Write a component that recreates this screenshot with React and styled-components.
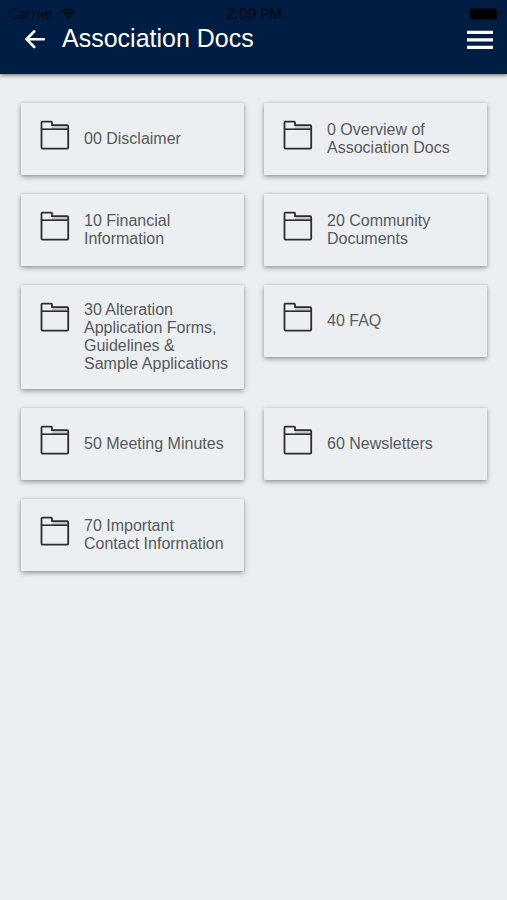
import React from "react";
import styled, { createGlobalStyle } from "styled-components";

const GlobalStyle = createGlobalStyle`
  *, *::before, *::after { box-sizing: border-box; }
  body {
    margin: 0;
    background: #ebeff2;
    font-family: "Liberation Sans", Arial, sans-serif;
  }
`;

const Header = styled.header`
  background: #001d44;
  height: 74px;
  box-shadow: 0 1px 4px rgba(0, 0, 0, 0.6);
`;

const StatusBar = styled.div`
  display: grid;
  grid-template-columns: 1fr auto 1fr;
  align-items: center;
  height: 22px;
  padding: 5px 7px 0 8px;
  color: #000814;
  font: 400 14px/16px Inter, sans-serif;
`;

const Carrier = styled.span`
  display: flex;
  align-items: center;
  gap: 7px;
`;

const Clock = styled.span`
  font-weight: 500;
`;

const Battery = styled.svg`
  justify-self: end;
`;

const Toolbar = styled.div`
  display: flex;
  align-items: center;
  height: 36px;
  padding: 0 14px 0 24px;
`;

const IconButton = styled.button`
  display: flex;
  flex: none;
  padding: 0;
  border: 0;
  background: none;
  color: #ffffff;
  cursor: pointer;
`;

const Title = styled.h1`
  flex: 1;
  margin: 0 0 4px 16px;
  color: #ffffff;
  font-size: 25px;
  font-weight: 400;
  line-height: 32px;
`;

const Folders = styled.main`
  display: grid;
  grid-template-columns: 1fr 1fr;
  align-items: start;
  gap: 19px 20px;
  padding: 29px 20px 29px 21px;
`;

const Card = styled.a`
  display: flex;
  min-height: 72px;
  padding: 16px 14px 16px 19px;
  border-radius: 1px;
  background: #ebeff2;
  box-shadow: 0 2px 5px rgba(0, 0, 0, 0.35), 0 0 3px rgba(0, 0, 0, 0.12);
  color: #58595b;
  text-decoration: none;
`;

const FolderSvg = styled.svg`
  flex: none;
  margin-top: 1px;
`;

const Label = styled.span`
  align-self: center;
  margin-left: 14px;
  font-size: 16px;
  line-height: 18px;
`;

const FolderIcon = () => (
  <FolderSvg width="30" height="30" viewBox="0 0 30 30" fill="none" stroke="#2b2d30" strokeWidth="1.8" strokeLinejoin="round" aria-hidden="true">
    <path d="M12 5.2H28V9.2H12Z" fill="#c3c6c9" stroke="none" />
    <path d="M1.5 27.6V2.5Q1.5 1.7 2.3 1.7H11.2Q12 1.7 12 2.5V5.2H27.2Q28.2 5.2 28.2 6.2V27.6Q28.2 28.6 27.2 28.6H2.5Q1.5 28.6 1.5 27.6Z" />
    <path d="M2 9.2H28" strokeWidth="1.6" />
  </FolderSvg>
);

const folders = [
  "00 Disclaimer",
  "0 Overview of Association Docs",
  "10 Financial Information",
  "20 Community Documents",
  "30 Alteration Application Forms, Guidelines & Sample Applications",
  "40 FAQ",
  "50 Meeting Minutes",
  "60 Newsletters",
  "70 Important Contact Information",
];

export default function App() {
  return (
    <>
      <GlobalStyle />
      <Header>
        <StatusBar>
          <Carrier>
            Carrier
            <svg width="15" height="11" viewBox="0 0 15 11" fill="none" stroke="currentColor" strokeWidth="2" aria-hidden="true">
              <path d="M.8 4.2Q7.5-1.8 14.2 4.2M3.2 6.6Q7.5 2.8 11.8 6.6" />
              <path d="M5.3 8.5Q7.5 6.7 9.7 8.5L7.5 10.8Z" fill="currentColor" stroke="none" />
            </svg>
          </Carrier>
          <Clock>2:09 PM</Clock>
          <Battery width="30" height="12" viewBox="0 0 30 12" fill="#000000" aria-hidden="true">
            <rect x="0" y="0.5" width="27" height="11" rx="2" />
            <path d="M28 4Q29.5 4.5 29.5 6T28 8Z" />
          </Battery>
        </StatusBar>
        <Toolbar>
          <IconButton type="button" aria-label="Back">
            <svg width="22" height="20" viewBox="0 0 22 20" fill="none" stroke="currentColor" strokeWidth="2.6" strokeLinecap="round" strokeLinejoin="round">
              <path d="M19.8 9.2H2.6M10.2 1.5L2.4 9.2L10.2 17" />
            </svg>
          </IconButton>
          <Title>Association Docs</Title>
          <IconButton type="button" aria-label="Menu">
            <svg width="26" height="20" viewBox="0 0 26 20" fill="currentColor">
              <path d="M0 0.8H26V4H0ZM0 8.3H26V11.5H0ZM0 15.8H26V19H0Z" />
            </svg>
          </IconButton>
        </Toolbar>
      </Header>
      <Folders>
        {folders.map((name) => (
          <Card href="#" key={name}>
            <FolderIcon />
            <Label>{name}</Label>
          </Card>
        ))}
      </Folders>
    </>
  );
}
